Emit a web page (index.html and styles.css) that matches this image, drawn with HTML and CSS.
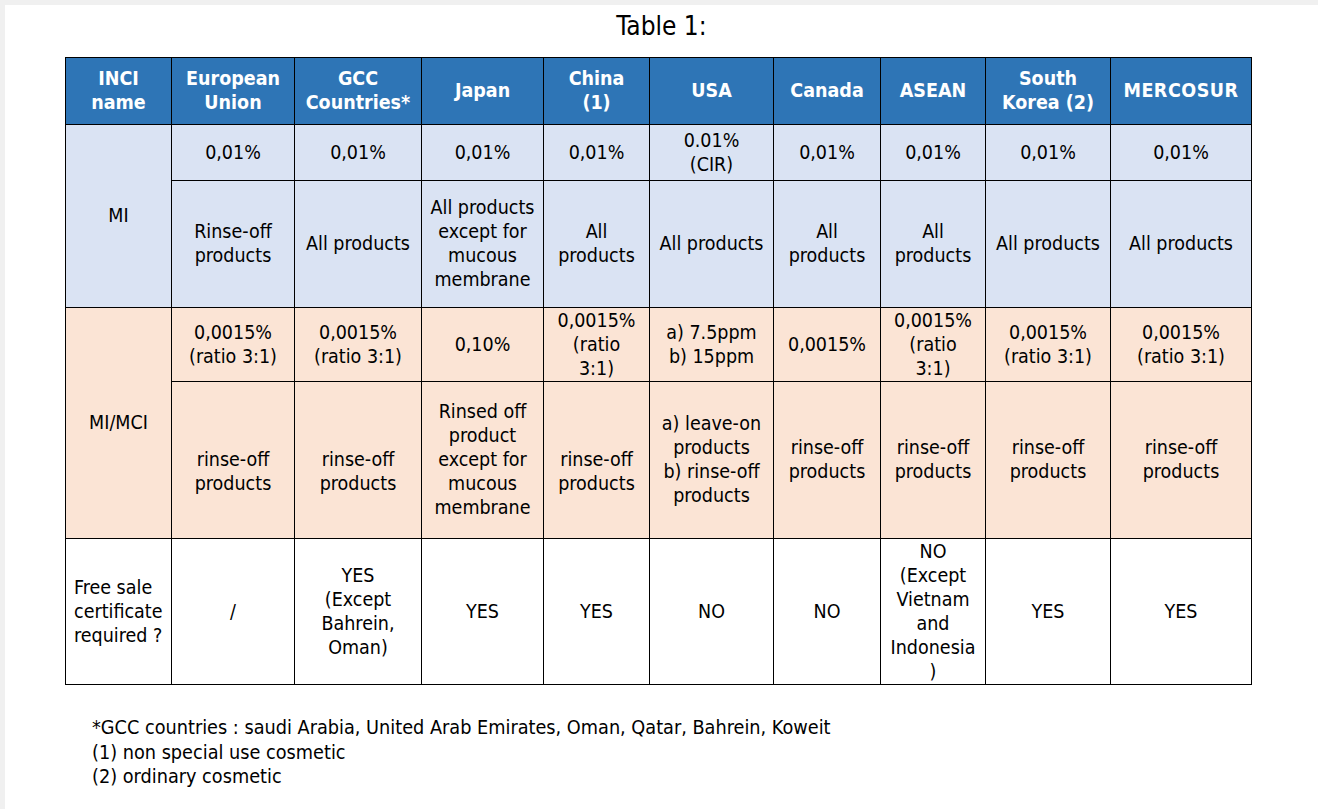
FILE: index.html
```html
<!DOCTYPE html>
<html>
<head>
<meta charset="utf-8">
<link rel="stylesheet" href="styles.css">
</head>
<body>
<div class="page">
  <div class="title">Table 1:</div>
  <table class="grid">
    <colgroup>
      <col class="c1"><col class="c2"><col class="c3"><col class="c4"><col class="c5">
      <col class="c6"><col class="c7"><col class="c8"><col class="c9"><col class="c10">
    </colgroup>
    <tr class="head">
      <th>INCI<br>name</th>
      <th>European<br>Union</th>
      <th>GCC<br>Countries*</th>
      <th>Japan</th>
      <th>China<br>(1)</th>
      <th>USA</th>
      <th>Canada</th>
      <th>ASEAN</th>
      <th>South<br>Korea (2)</th>
      <th class="wide">MERCOSUR</th>
    </tr>
    <tr class="blue r1">
      <td rowspan="2">MI</td>
      <td>0,01%</td>
      <td>0,01%</td>
      <td>0,01%</td>
      <td>0,01%</td>
      <td>0.01%<br>(CIR)</td>
      <td>0,01%</td>
      <td>0,01%</td>
      <td>0,01%</td>
      <td>0,01%</td>
    </tr>
    <tr class="blue r2">
      <td>Rinse-off<br>products</td>
      <td>All products</td>
      <td>All products<br>except for<br>mucous<br>membrane</td>
      <td>All<br>products</td>
      <td>All products</td>
      <td>All<br>products</td>
      <td>All<br>products</td>
      <td>All products</td>
      <td>All products</td>
    </tr>
    <tr class="peach r3">
      <td rowspan="2">MI/MCI</td>
      <td>0,0015%<br>(ratio 3:1)</td>
      <td>0,0015%<br>(ratio 3:1)</td>
      <td>0,10%</td>
      <td>0,0015%<br>(ratio<br>3:1)</td>
      <td>a) 7.5ppm<br>b) 15ppm</td>
      <td>0,0015%</td>
      <td>0,0015%<br>(ratio<br>3:1)</td>
      <td>0,0015%<br>(ratio 3:1)</td>
      <td>0,0015%<br>(ratio 3:1)</td>
    </tr>
    <tr class="peach r4">
      <td class="low">rinse-off<br>products</td>
      <td class="low">rinse-off<br>products</td>
      <td>Rinsed off<br>product<br>except for<br>mucous<br>membrane</td>
      <td class="low">rinse-off<br>products</td>
      <td>a) leave-on<br>products<br>b) rinse-off<br>products</td>
      <td>rinse-off<br>products</td>
      <td>rinse-off<br>products</td>
      <td>rinse-off<br>products</td>
      <td>rinse-off<br>products</td>
    </tr>
    <tr class="white r5">
      <td class="left">Free sale<br>certificate<br>required ?</td>
      <td>/</td>
      <td>YES<br>(Except<br>Bahrein,<br>Oman)</td>
      <td>YES</td>
      <td>YES</td>
      <td>NO</td>
      <td>NO</td>
      <td>NO<br>(Except<br>Vietnam<br>and<br>Indonesia<br>)</td>
      <td>YES</td>
      <td>YES</td>
    </tr>
  </table>
  <div class="notes">
    <div>*GCC countries : saudi Arabia, United Arab Emirates, Oman, Qatar, Bahrein, Koweit</div>
    <div>(1) non special use cosmetic</div>
    <div>(2) ordinary cosmetic</div>
  </div>
</div>
</body>
</html>
```

FILE: styles.css
```css
html, body {
  margin: 0;
  padding: 0;
  background: #f0f0f0;
}
body {
  font-family: "DejaVu Sans Condensed", "DejaVu Sans", sans-serif;
  color: #000;
}
.page {
  margin: 5px 0 0 5px;
  background: #fff;
  height: 804px;
  padding-top: 7px;
  box-sizing: border-box;
}
.title {
  text-align: center;
  font-size: 26px;
  line-height: 28px;
  height: 45px;
}
.grid {
  border-collapse: collapse;
  table-layout: fixed;
  width: 1186px;
  margin-left: 60px;
  font-size: 19.5px;
  line-height: 24px;
}
.c1 { width: 106px; }
.c2 { width: 123px; }
.c3 { width: 127px; }
.c4 { width: 122px; }
.c5 { width: 106px; }
.c6 { width: 124px; }
.c7 { width: 107px; }
.c8 { width: 105px; }
.c9 { width: 125px; }
.c10 { width: 141px; }
.grid th, .grid td {
  border: 1px solid #000;
  text-align: center;
  vertical-align: middle;
  padding: 0 2px;
  overflow: hidden;
}
.grid th {
  background: #2e75b6;
  color: #fff;
  font-weight: bold;
  font-size: 19.5px;
}
.grid th.wide { letter-spacing: 0.5px; }
.head { height: 67px; }
.r1 { height: 56px; }
.r2 { height: 127px; }
.r3 { height: 74px; }
.r4 { height: 157px; }
.r5 { height: 146px; }
.blue td { background: #dae3f3; }
.peach td { background: #fbe4d5; }
.white td { background: #fff; }
.grid td.low { padding-top: 24px; }
.grid td.left { text-align: left; padding-left: 8px; }
.notes {
  margin: 31px 0 0 87px;
  font-size: 19.7px;
  line-height: 24.5px;
}
```
